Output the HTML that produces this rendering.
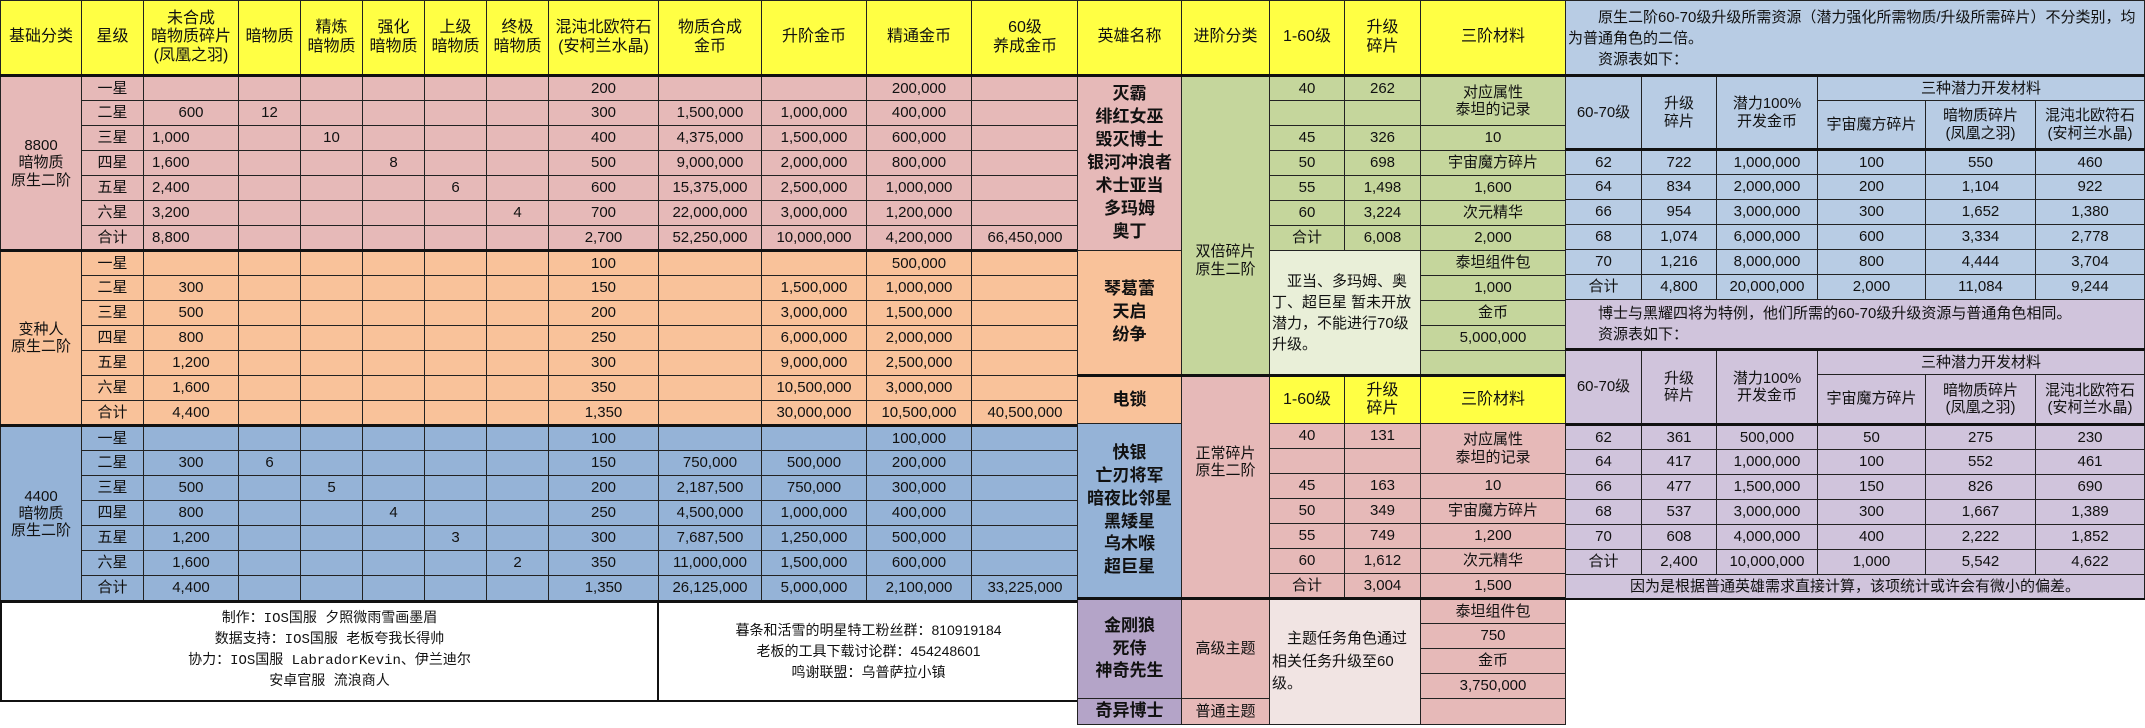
<!DOCTYPE html>
<html><head><meta charset="utf-8">
<style>
body{margin:0;width:2145px;height:728px;background:#fff;overflow:hidden;position:relative;font-family:"Liberation Sans","Noto Sans CJK SC",sans-serif;}
table{border-collapse:collapse;table-layout:fixed;position:absolute;}
td{border:1px solid #222;padding:0;text-align:center;vertical-align:middle;font-size:15px;color:#111;line-height:1.15;overflow:hidden;white-space:nowrap;}
.y td.h,td.h{background:#ffff44;font-size:16px;}
.pk td{background:#e6b9b8;}
.or td{background:#f9c29a;}
.bl td{background:#95b3d7;}
tr.top td{border-top:3px solid #111;}
.hero{font-weight:bold;font-size:17px;line-height:1.35;}
.note{text-align:left;white-space:normal;padding:0 2px;}
</style></head><body>

<!-- LEFT TABLE -->
<table style="left:0;top:0;width:1078px;">
<colgroup><col style="width:81px"><col style="width:62px"><col style="width:95px"><col style="width:62px"><col style="width:62px"><col style="width:62px"><col style="width:62px"><col style="width:62px"><col style="width:110px"><col style="width:103px"><col style="width:105px"><col style="width:105px"><col style="width:107px"></colgroup>
<tr style="height:75px"><td class="h">基础分类</td><td class="h">星级</td><td class="h">未合成<br>暗物质碎片<br>(凤凰之羽)</td><td class="h">暗物质</td><td class="h">精炼<br>暗物质</td><td class="h">强化<br>暗物质</td><td class="h">上级<br>暗物质</td><td class="h">终极<br>暗物质</td><td class="h">混沌北欧符石<br>(安柯兰水晶)</td><td class="h">物质合成<br>金币</td><td class="h">升阶金币</td><td class="h">精通金币</td><td class="h">60级<br>养成金币</td></tr>
<tbody class="pk">
<tr class="top" style="height:25px"><td rowspan="7">8800<br>暗物质<br>原生二阶</td><td>一星</td><td></td><td></td><td></td><td></td><td></td><td></td><td>200</td><td></td><td></td><td>200,000</td><td></td></tr>
<tr style="height:25px"><td>二星</td><td>600</td><td>12</td><td></td><td></td><td></td><td></td><td>300</td><td>1,500,000</td><td>1,000,000</td><td>400,000</td><td></td></tr>
<tr style="height:25px"><td>三星</td><td style="text-align:left;padding-left:8px">1,000</td><td></td><td>10</td><td></td><td></td><td></td><td>400</td><td>4,375,000</td><td>1,500,000</td><td>600,000</td><td></td></tr>
<tr style="height:25px"><td>四星</td><td style="text-align:left;padding-left:8px">1,600</td><td></td><td></td><td>8</td><td></td><td></td><td>500</td><td>9,000,000</td><td>2,000,000</td><td>800,000</td><td></td></tr>
<tr style="height:25px"><td>五星</td><td style="text-align:left;padding-left:8px">2,400</td><td></td><td></td><td></td><td>6</td><td></td><td>600</td><td>15,375,000</td><td>2,500,000</td><td>1,000,000</td><td></td></tr>
<tr style="height:25px"><td>六星</td><td style="text-align:left;padding-left:8px">3,200</td><td></td><td></td><td></td><td></td><td>4</td><td>700</td><td>22,000,000</td><td>3,000,000</td><td>1,200,000</td><td></td></tr>
<tr style="height:25px"><td>合计</td><td style="text-align:left;padding-left:8px">8,800</td><td></td><td></td><td></td><td></td><td></td><td>2,700</td><td>52,250,000</td><td>10,000,000</td><td>4,200,000</td><td>66,450,000</td></tr>
</tbody>
<tbody class="or">
<tr class="top" style="height:25px"><td rowspan="7">变种人<br>原生二阶</td><td>一星</td><td></td><td></td><td></td><td></td><td></td><td></td><td>100</td><td></td><td></td><td>500,000</td><td></td></tr>
<tr style="height:25px"><td>二星</td><td>300</td><td></td><td></td><td></td><td></td><td></td><td>150</td><td></td><td>1,500,000</td><td>1,000,000</td><td></td></tr>
<tr style="height:25px"><td>三星</td><td>500</td><td></td><td></td><td></td><td></td><td></td><td>200</td><td></td><td>3,000,000</td><td>1,500,000</td><td></td></tr>
<tr style="height:25px"><td>四星</td><td>800</td><td></td><td></td><td></td><td></td><td></td><td>250</td><td></td><td>6,000,000</td><td>2,000,000</td><td></td></tr>
<tr style="height:25px"><td>五星</td><td>1,200</td><td></td><td></td><td></td><td></td><td></td><td>300</td><td></td><td>9,000,000</td><td>2,500,000</td><td></td></tr>
<tr style="height:25px"><td>六星</td><td>1,600</td><td></td><td></td><td></td><td></td><td></td><td>350</td><td></td><td>10,500,000</td><td>3,000,000</td><td></td></tr>
<tr style="height:25px"><td>合计</td><td>4,400</td><td></td><td></td><td></td><td></td><td></td><td>1,350</td><td></td><td>30,000,000</td><td>10,500,000</td><td>40,500,000</td></tr>
</tbody>
<tbody class="bl">
<tr class="top" style="height:25px"><td rowspan="7">4400<br>暗物质<br>原生二阶</td><td>一星</td><td></td><td></td><td></td><td></td><td></td><td></td><td>100</td><td></td><td></td><td>100,000</td><td></td></tr>
<tr style="height:25px"><td>二星</td><td>300</td><td>6</td><td></td><td></td><td></td><td></td><td>150</td><td>750,000</td><td>500,000</td><td>200,000</td><td></td></tr>
<tr style="height:25px"><td>三星</td><td>500</td><td></td><td>5</td><td></td><td></td><td></td><td>200</td><td>2,187,500</td><td>750,000</td><td>300,000</td><td></td></tr>
<tr style="height:25px"><td>四星</td><td>800</td><td></td><td></td><td>4</td><td></td><td></td><td>250</td><td>4,500,000</td><td>1,000,000</td><td>400,000</td><td></td></tr>
<tr style="height:25px"><td>五星</td><td>1,200</td><td></td><td></td><td></td><td>3</td><td></td><td>300</td><td>7,687,500</td><td>1,250,000</td><td>500,000</td><td></td></tr>
<tr style="height:25px"><td>六星</td><td>1,600</td><td></td><td></td><td></td><td></td><td>2</td><td>350</td><td>11,000,000</td><td>1,500,000</td><td>600,000</td><td></td></tr>
<tr style="height:25px"><td>合计</td><td>4,400</td><td></td><td></td><td></td><td></td><td></td><td>1,350</td><td>26,125,000</td><td>5,000,000</td><td>2,100,000</td><td>33,225,000</td></tr>
</tbody>
</table>

<!-- CREDITS -->
<table style="left:0;top:600px;width:1078px;">
<colgroup><col style="width:657px"><col style="width:421px"></colgroup>
<tr style="height:99px"><td style="border:2px solid #111;border-top:3px solid #111;font-size:14px;line-height:1.5;font-family:'Liberation Mono','Noto Sans CJK SC',monospace">制作：IOS国服 夕照微雨雪画墨眉<br>数据支持：IOS国服 老板夸我长得帅<br>协力：IOS国服 LabradorKevin、伊兰迪尔<br>安卓官服 流浪商人</td>
<td style="border:2px solid #111;border-top:3px solid #111;font-size:14px;line-height:1.5;">暮条和活雪的明星特工粉丝群：810919184<br>老板的工具下载讨论群：454248601<br>鸣谢联盟：乌普萨拉小镇</td></tr>
</table>

<!-- MIDDLE TABLE -->
<table style="left:1077px;top:0;width:488px;">
<colgroup><col style="width:104px"><col style="width:88px"><col style="width:75px"><col style="width:76px"><col style="width:145px"></colgroup>
<tr style="height:75px"><td class="h">英雄名称</td><td class="h">进阶分类</td><td class="h">1-60级</td><td class="h">升级<br>碎片</td><td class="h">三阶材料</td></tr>
<tr class="top" style="height:25px"><td rowspan="7" class="hero" style="background:#e6b9b8">灭霸<br>绯红女巫<br>毁灭博士<br>银河冲浪者<br>术士亚当<br>多玛姆<br>奥丁</td><td rowspan="12" style="background:#c5d69c;padding-top:70px">双倍碎片<br>原生二阶</td><td style="background:#c5d69c">40</td><td style="background:#c5d69c">262</td><td rowspan="2" style="background:#c5d69c">对应属性<br>泰坦的记录</td></tr>
<tr style="height:25px"><td style="background:#c5d69c"></td><td style="background:#c5d69c"></td></tr>
<tr style="height:25px"><td style="background:#c5d69c">45</td><td style="background:#c5d69c">326</td><td style="background:#c5d69c">10</td></tr>
<tr style="height:25px"><td style="background:#c5d69c">50</td><td style="background:#c5d69c">698</td><td style="background:#c5d69c">宇宙魔方碎片</td></tr>
<tr style="height:25px"><td style="background:#c5d69c">55</td><td style="background:#c5d69c">1,498</td><td style="background:#c5d69c">1,600</td></tr>
<tr style="height:25px"><td style="background:#c5d69c">60</td><td style="background:#c5d69c">3,224</td><td style="background:#c5d69c">次元精华</td></tr>
<tr style="height:25px"><td style="background:#c5d69c">合计</td><td style="background:#c5d69c">6,008</td><td style="background:#c5d69c">2,000</td></tr>
<tr style="height:25px"><td rowspan="5" class="hero" style="background:#f9c29a">琴葛蕾<br>天启<br>纷争</td><td rowspan="5" colspan="2" class="note" style="background:#e9efd8;font-size:15px;line-height:1.4">　亚当、多玛姆、奥丁、超巨星 暂未开放潜力，不能进行70级升级。</td><td style="background:#c5d69c">泰坦组件包</td></tr>
<tr style="height:25px"><td style="background:#c5d69c">1,000</td></tr>
<tr style="height:25px"><td style="background:#c5d69c">金币</td></tr>
<tr style="height:25px"><td style="background:#c5d69c">5,000,000</td></tr>
<tr style="height:25px"><td style="background:#c5d69c"></td></tr>
<tr class="top" style="height:24px"><td rowspan="2" class="hero" style="background:#f9c29a">电锁</td><td rowspan="9" style="background:#e6b9b8;padding-bottom:50px">正常碎片<br>原生二阶</td><td rowspan="2" class="h">1-60级</td><td rowspan="2" class="h">升级<br>碎片</td><td rowspan="2" class="h">三阶材料</td></tr>
<tr style="height:24px"></tr>
<tr style="height:25px"><td rowspan="7" class="hero" style="background:#95b3d7">快银<br>亡刃将军<br>暗夜比邻星<br>黑矮星<br>乌木喉<br>超巨星</td><td style="background:#e6b9b8">40</td><td style="background:#e6b9b8">131</td><td rowspan="2" style="background:#e6b9b8">对应属性<br>泰坦的记录</td></tr>
<tr style="height:25px"><td style="background:#e6b9b8"></td><td style="background:#e6b9b8"></td></tr>
<tr style="height:25px"><td style="background:#e6b9b8">45</td><td style="background:#e6b9b8">163</td><td style="background:#e6b9b8">10</td></tr>
<tr style="height:25px"><td style="background:#e6b9b8">50</td><td style="background:#e6b9b8">349</td><td style="background:#e6b9b8">宇宙魔方碎片</td></tr>
<tr style="height:25px"><td style="background:#e6b9b8">55</td><td style="background:#e6b9b8">749</td><td style="background:#e6b9b8">1,200</td></tr>
<tr style="height:25px"><td style="background:#e6b9b8">60</td><td style="background:#e6b9b8">1,612</td><td style="background:#e6b9b8">次元精华</td></tr>
<tr style="height:25px"><td style="background:#e6b9b8">合计</td><td style="background:#e6b9b8">3,004</td><td style="background:#e6b9b8">1,500</td></tr>
<tr class="top" style="height:25px"><td rowspan="4" class="hero" style="background:#b4a4c8">金刚狼<br>死侍<br>神奇先生</td><td rowspan="4" style="background:#e6b9b8">高级主题</td><td rowspan="5" colspan="2" class="note" style="background:#f1e4e3;line-height:1.5">　主题任务角色通过相关任务升级至60级。</td><td style="background:#e6b9b8">泰坦组件包</td></tr>
<tr style="height:25px"><td style="background:#e6b9b8">750</td></tr>
<tr style="height:25px"><td style="background:#e6b9b8">金币</td></tr>
<tr style="height:25px"><td style="background:#e6b9b8">3,750,000</td></tr>
<tr style="height:26px"><td class="hero" style="background:#b4a4c8">奇异博士</td><td style="background:#e6b9b8">普通主题</td><td style="background:#e6b9b8"></td></tr>
</table>

<!-- RIGHT TABLE -->
<table style="left:1565px;top:0;width:579px;">
<colgroup><col style="width:76px"><col style="width:75px"><col style="width:101px"><col style="width:108px"><col style="width:110px"><col style="width:109px"></colgroup>
<tbody style="background:#b8cce4">
<tr style="height:75px"><td colspan="6" class="note" style="background:#b8cce4;font-size:15px;line-height:1.4;vertical-align:top;padding-top:6px">　　原生二阶60-70级升级所需资源（潜力强化所需物质/升级所需碎片）不分类别，均为普通角色的二倍。<br>　　资源表如下：</td></tr>
<tr class="top" style="height:25px"><td rowspan="2">60-70级</td><td rowspan="2">升级<br>碎片</td><td rowspan="2">潜力100%<br>开发金币</td><td colspan="3">三种潜力开发材料</td></tr>
<tr style="height:49px"><td>宇宙魔方碎片</td><td>暗物质碎片<br>(凤凰之羽)</td><td>混沌北欧符石<br>(安柯兰水晶)</td></tr>
<tr class="top" style="height:25px"><td>62</td><td>722</td><td>1,000,000</td><td>100</td><td>550</td><td>460</td></tr>
<tr style="height:25px"><td>64</td><td>834</td><td>2,000,000</td><td>200</td><td>1,104</td><td>922</td></tr>
<tr style="height:25px"><td>66</td><td>954</td><td>3,000,000</td><td>300</td><td>1,652</td><td>1,380</td></tr>
<tr style="height:25px"><td>68</td><td>1,074</td><td>6,000,000</td><td>600</td><td>3,334</td><td>2,778</td></tr>
<tr style="height:25px"><td>70</td><td>1,216</td><td>8,000,000</td><td>800</td><td>4,444</td><td>3,704</td></tr>
<tr style="height:25px"><td>合计</td><td>4,800</td><td>20,000,000</td><td>2,000</td><td>11,084</td><td>9,244</td></tr>
</tbody>
<tbody style="background:#d0c4dc">
<tr style="height:50px"><td colspan="6" class="note" style="line-height:1.4">　　博士与黑耀四将为特例，他们所需的60-70级升级资源与普通角色相同。<br>　　资源表如下：</td></tr>
<tr class="top" style="height:25px"><td rowspan="2">60-70级</td><td rowspan="2">升级<br>碎片</td><td rowspan="2">潜力100%<br>开发金币</td><td colspan="3">三种潜力开发材料</td></tr>
<tr style="height:50px"><td>宇宙魔方碎片</td><td>暗物质碎片<br>(凤凰之羽)</td><td>混沌北欧符石<br>(安柯兰水晶)</td></tr>
<tr class="top" style="height:25px"><td>62</td><td>361</td><td>500,000</td><td>50</td><td>275</td><td>230</td></tr>
<tr style="height:25px"><td>64</td><td>417</td><td>1,000,000</td><td>100</td><td>552</td><td>461</td></tr>
<tr style="height:25px"><td>66</td><td>477</td><td>1,500,000</td><td>150</td><td>826</td><td>690</td></tr>
<tr style="height:25px"><td>68</td><td>537</td><td>3,000,000</td><td>300</td><td>1,667</td><td>1,389</td></tr>
<tr style="height:25px"><td>70</td><td>608</td><td>4,000,000</td><td>400</td><td>2,222</td><td>1,852</td></tr>
<tr style="height:25px"><td>合计</td><td>2,400</td><td>10,000,000</td><td>1,000</td><td>5,542</td><td>4,622</td></tr>
<tr style="height:24px"><td colspan="6" style="border-bottom:2px solid #111">因为是根据普通英雄需求直接计算，该项统计或许会有微小的偏差。</td></tr>
</tbody>
</table>
</body></html>
